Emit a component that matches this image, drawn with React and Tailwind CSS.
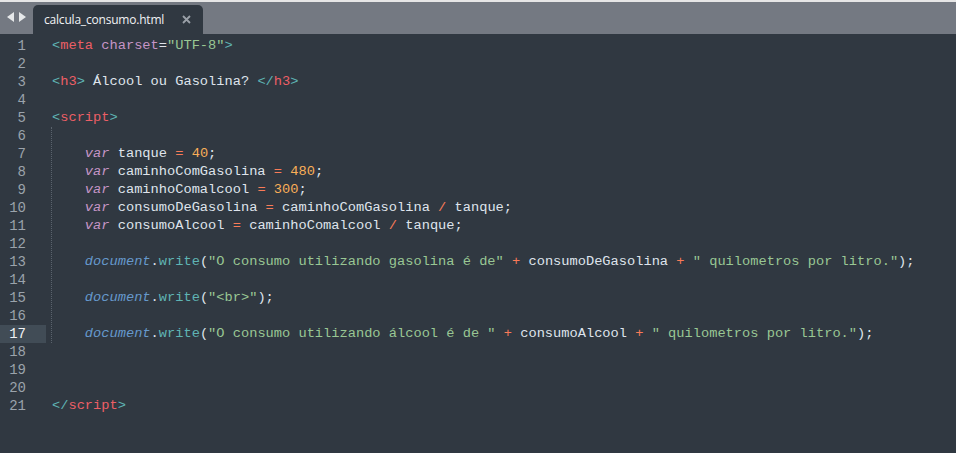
import React from "react";

// Mariana palette
const c = {
  punct: "text-[#5fb4b4]",
  tag: "text-[#ec5f66]",
  attr: "text-[#c695c6]",
  str: "text-[#99c794]",
  num: "text-[#f9ae58]",
  op: "text-[#f97b58]",
  kw: "text-[#c695c6] italic",
  obj: "text-[#6699cc] italic",
  fn: "text-[#5fb4b4]",
  txt: "text-[#d8dee9]",
};

const S = ({ k, children }) => <span className={c[k]}>{children}</span>;

const ind = "    ";

const lines = [
  [<S k="punct">{"<"}</S>, <S k="tag">meta</S>, " ", <S k="attr">charset</S>, "=", <S k="str">"UTF-8"</S>, <S k="punct">{">"}</S>],
  [],
  [<S k="punct">{"<"}</S>, <S k="tag">h3</S>, <S k="punct">{">"}</S>, " Álcool ou Gasolina? ", <S k="punct">{"</"}</S>, <S k="tag">h3</S>, <S k="punct">{">"}</S>],
  [],
  [<S k="punct">{"<"}</S>, <S k="tag">script</S>, <S k="punct">{">"}</S>],
  [],
  [ind, <S k="kw">var</S>, " tanque ", <S k="op">=</S>, " ", <S k="num">40</S>, ";"],
  [ind, <S k="kw">var</S>, " caminhoComGasolina ", <S k="op">=</S>, " ", <S k="num">480</S>, ";"],
  [ind, <S k="kw">var</S>, " caminhoComalcool ", <S k="op">=</S>, " ", <S k="num">300</S>, ";"],
  [ind, <S k="kw">var</S>, " consumoDeGasolina ", <S k="op">=</S>, " caminhoComGasolina ", <S k="op">/</S>, " tanque;"],
  [ind, <S k="kw">var</S>, " consumoAlcool ", <S k="op">=</S>, " caminhoComalcool ", <S k="op">/</S>, " tanque;"],
  [],
  [ind, <S k="obj">document</S>, ".", <S k="fn">write</S>, "(", <S k="str">"O consumo utilizando gasolina é de"</S>, " ", <S k="op">+</S>, " consumoDeGasolina ", <S k="op">+</S>, " ", <S k="str">" quilometros por litro."</S>, ");"],
  [],
  [ind, <S k="obj">document</S>, ".", <S k="fn">write</S>, "(", <S k="str">"&lt;br&gt;"</S>, ");"],
  [],
  [ind, <S k="obj">document</S>, ".", <S k="fn">write</S>, "(", <S k="str">"O consumo utilizando álcool é de "</S>, " ", <S k="op">+</S>, " consumoAlcool ", <S k="op">+</S>, " ", <S k="str">" quilometros por litro."</S>, ");"],
  [],
  [],
  [],
  [<S k="punct">{"</"}</S>, <S k="tag">script</S>, <S k="punct">{">"}</S>],
];

const App = () => {
  return (
    <div className="w-[956px] h-[453px] overflow-hidden flex flex-col bg-[#303841]">
      {/* Top strip */}
      <div className="h-[2px] bg-[#e6e6e6]" />

      {/* Tab bar */}
      <div className="h-[32px] bg-[#747982] flex items-end">
        <div className="w-[33px] h-full flex items-center justify-center gap-[3px] pb-[2px]">
          <svg width="8" height="10" viewBox="0 0 8 10">
            <path d="M7 0 L0 5 L7 10 Z" fill="#e6e8ea" />
          </svg>
          <svg width="8" height="10" viewBox="0 0 8 10">
            <path d="M1 0 L8 5 L1 10 Z" fill="#e6e8ea" />
          </svg>
        </div>
        <div className="w-[170px] h-[29px] bg-[#303841] rounded-t-[5px] flex items-center pl-[11px] pr-[12px]">
          <span className="flex-1 text-[12px] text-[#f0f2f4] font-['Open_Sans',sans-serif] tracking-[-0.2px]">
            calcula_consumo.html
          </span>
          <svg width="9" height="9" viewBox="0 0 9 9">
            <path d="M1 1 L8 8 M8 1 L1 8" stroke="#9aa0a8" strokeWidth="1.8" />
          </svg>
        </div>
      </div>

      {/* Editor */}
      <div className="flex-1 flex pt-[3px] font-['Liberation_Mono',monospace] text-[13.7px] leading-[18px]">
        <div className="w-[46px] flex flex-col">
          {lines.map((_, i) => (
            <div
              key={i}
              className={`h-[18px] text-right pr-[20px] text-[14px] ${
                i === 16 ? "bg-[#414c56] text-[#f0f2f4]" : "text-[#9ba3ab]"
              }`}
            >
              {i + 1}
            </div>
          ))}
        </div>
        <div className="relative flex-1 flex flex-col pl-[6px] text-[#dfe4ec]">
          {/* indent guide */}
          <div className="absolute left-[5px] top-[90px] h-[216px] border-l border-dotted border-[#5a636d]" />
          {lines.map((parts, i) => (
            <div key={i} className="h-[18px] whitespace-pre">
              {parts.map((p, j) => (
                <React.Fragment key={j}>{p}</React.Fragment>
              ))}
            </div>
          ))}
        </div>
      </div>
    </div>
  );
};

export default App;
